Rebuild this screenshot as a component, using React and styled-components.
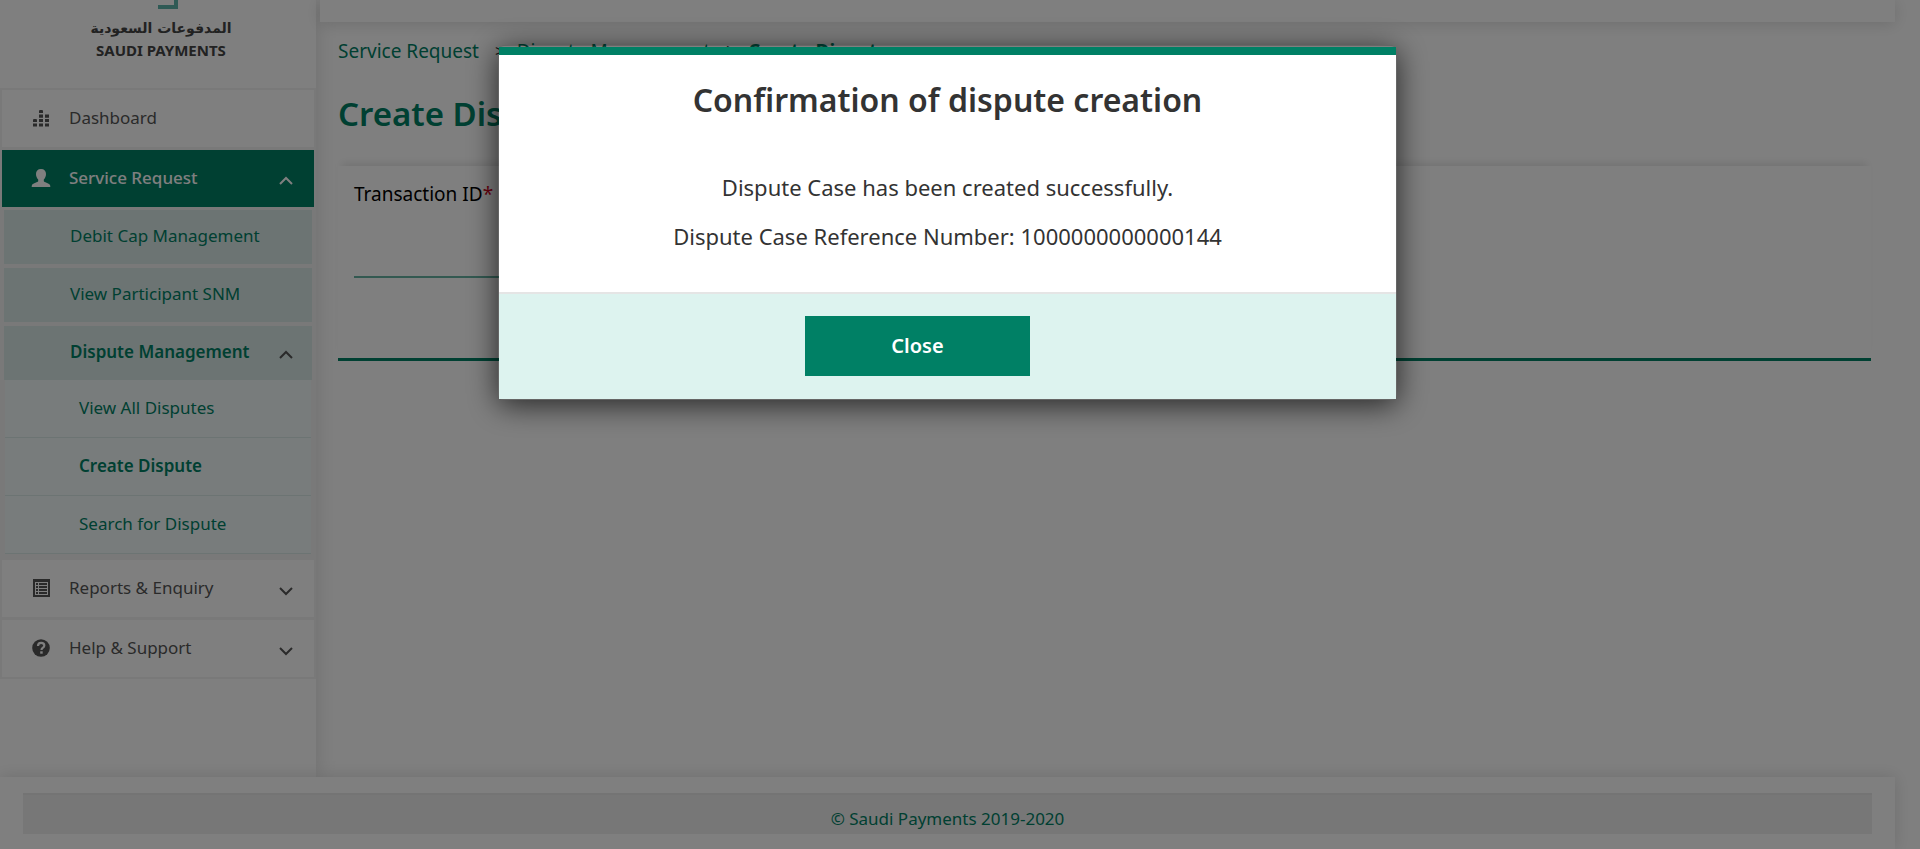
import React from "react";
import styled, { createGlobalStyle } from "styled-components";

const green = "#008065";
const line = "#f2f2f2";

const GlobalStyle = createGlobalStyle`
  * { box-sizing: border-box; }
  body { margin: 0; background: #fff; color: #333; font-family: "Noto Sans", "Open Sans", sans-serif; font-size: 17px; }
  h1, h2, p, ul, ol { margin: 0; padding: 0; }
  ul, ol { list-style: none; }
  a { color: inherit; text-decoration: none; }
`;

const Page = styled.div`
  display: flex;
  flex-direction: column;
  min-height: 100vh;
  padding-right: 25px;
  overflow: hidden;
`;

const Columns = styled.div`
  display: flex;
  flex: 1;
`;

const Sidebar = styled.aside`
  flex: 0 0 316px;
  background: #fff;
  box-shadow: 0 0 20px rgba(0, 0, 0, 0.14);
`;

const Logo = styled.div`
  display: flex;
  flex-direction: column;
  align-items: center;
  height: 88px;
  padding-left: 6px;
  color: #444;
  font-weight: 700;
`;

const LogoMark = styled.svg`
  display: block;
  width: 20px;
  height: 9px;
  margin: 0 0 8px 14px;
`;

const LogoArabic = styled.span`
  font-family: "DejaVu Sans", sans-serif;
  font-size: 14px;
  line-height: 22px;
`;

const LogoLatin = styled.span`
  font-size: 15px;
  line-height: 22px;
`;

const Menu = styled.ul`
  display: flex;
  flex-direction: column;
  gap: 3px;
  padding: 2px;
  background: ${line};
`;

const MenuLink = styled.a`
  display: flex;
  align-items: center;
  gap: 18px;
  height: 57px;
  padding: 0 21px 2px 29px;
  background: ${(p) => (p.$active ? green : "#fff")};
  color: ${(p) => (p.$active ? "#fff" : "#555")};
  font-weight: ${(p) => (p.$active ? 500 : 400)};
`;

const SubMenu = styled.ul`
  display: flex;
  flex-direction: column;
  gap: 4px;
  padding: 3px 2px;
`;

const SubLink = styled.a`
  display: flex;
  align-items: center;
  height: 54px;
  padding: 0 19px 3px 66px;
  background: #d8e8e6;
  color: ${green};
  font-weight: ${(p) => (p.$active ? 600 : 400)};
`;

const LeafMenu = styled.ul`
  padding: 0 1px;
`;

const LeafLink = styled(SubLink)`
  height: 58px;
  padding-left: 74px;
  background: #f1f9f9;
  border-bottom: 1px solid #d8e8e6;
`;

const ChevronIcon = styled.svg`
  width: 14px;
  height: 10px;
  margin: 6px 0 0 auto;
  color: ${(p) => (p.$light ? "#fff" : "#555")};
`;

const Main = styled.main`
  flex: 1;
  min-width: 0;
  padding-left: 4px;
`;

const Header = styled.header`
  height: 22px;
  background: #fff;
  box-shadow: 0 2px 16px rgba(0, 0, 0, 0.14);
`;

const Content = styled.div`
  padding: 15px 24px 0 18px;
`;

const Crumbs = styled.ol`
  display: flex;
  gap: 16px;
  color: ${green};
  font-size: 19px;
  line-height: 28px;

  li + li { display: flex; gap: 12px; }
  li + li::before { content: ">"; font-size: 17px; color: #333; }
  li:last-child { font-weight: 700; }
`;

const PageTitle = styled.h1`
  padding: 23px 0 26px;
  color: ${green};
  font-size: 33px;
  line-height: 52px;
  font-weight: 600;
`;

const Form = styled.form`
  padding: 12px 16px 80px;
  border-bottom: 3px solid ${green};
  box-shadow: 0 -7px 8px -4px rgba(0, 0, 0, 0.1);
`;

const Field = styled.label`
  display: block;
  width: 360px;
  color: #000;
  font-size: 19px;
  line-height: 32px;
`;

const Required = styled.span`
  color: #d0021b;
`;

const TextInput = styled.input`
  display: block;
  width: 100%;
  height: 68px;
  border: 0;
  border-bottom: 2px solid #66b3a3;
  background: transparent;
  font: inherit;
`;

const Footer = styled.footer`
  position: relative;
  padding: 16px 23px 15px;
  background: #fff;
  box-shadow: 0 0 16px rgba(0, 0, 0, 0.14);
`;

const Copyright = styled.p`
  height: 41px;
  padding-top: 12px;
  border-top: 2px solid #e8e8e8;
  background: #eee;
  color: ${green};
  line-height: 24px;
  text-align: center;
`;

const Backdrop = styled.div`
  position: fixed;
  inset: 0;
  display: flex;
  justify-content: center;
  align-items: flex-start;
  padding: 45px 25px 0 0;
  background: rgba(0, 0, 0, 0.5);
`;

const Dialog = styled.section`
  width: 899px;
  max-width: 100%;
  padding-top: 1px;
  border: 1px solid rgba(0, 0, 0, 0.2);
  border-radius: 6px;
  box-shadow: 0 5px 30px rgba(0, 0, 0, 0.7);
`;

const DialogHead = styled.header`
  border-top: 8px solid ${green};
  padding: 19px 20px 22px;
  background: #fff;
  text-align: center;
`;

const DialogTitle = styled.h2`
  font-size: 32px;
  line-height: 52px;
  font-weight: 600;
`;

const DialogBody = styled.div`
  padding: 15px 20px 31px;
  background: #fff;
  font-size: 22px;
  line-height: 49px;
  text-align: center;
`;

const DialogFoot = styled.footer`
  display: flex;
  justify-content: center;
  padding: 22px 60px 23px 0;
  border-top: 2px solid #e5e5e5;
  background: #ddf3ef;
`;

const CloseButton = styled.button`
  width: 225px;
  height: 60px;
  padding: 0 0 2px;
  border: 0;
  background: ${green};
  color: #fff;
  font: inherit;
  font-size: 20px;
  font-weight: 600;
`;

const Chevron = ({ up, light }) => (
  <ChevronIcon $light={light} viewBox="0 0 14 10" fill="none" stroke="currentColor" strokeWidth="2" aria-hidden="true">
    <path d={up ? "M1 8 7 2l6 6" : "M1 2l6 6 6-6"} />
  </ChevronIcon>
);

const DashboardIcon = () => (
  <svg width="20" height="20" viewBox="0 0 20 20" fill="currentColor" aria-hidden="true">
    <path d="M8 3.200Q8 2 9 2h2q1 0 1 1.200V5H8zM8 6.500h4v3.200H8zM14 6.500h4v3.200h-4zM2 12.200Q2 11 3 11h2q1 0 1 1.200V14H2zM8 11h4v3H8zM14 11h4v3h-4zM2 15.500h4v3H2zM8 15.500h4v3H8zM14 15.500h4v3h-4z" />
  </svg>
);

const UserIcon = () => (
  <svg width="20" height="20" viewBox="0 0 20 20" fill="currentColor" aria-hidden="true">
    <path d="M10 1c3.300 0 5 2 5 5 0 2.300-.9 4.200-2.200 5.500v1.800c0 .8 5.200 2 6.200 3.700.3.600.3 1.300.3 2H.7c0-.7 0-1.400.3-2 1-1.700 6.200-2.900 6.200-3.700v-1.800C5.900 10.200 5 8.300 5 6c0-3 1.700-5 5-5z" />
  </svg>
);

const ListIcon = () => (
  <svg width="20" height="20" viewBox="0 0 20 20" fill="none" stroke="currentColor" aria-hidden="true">
    <path d="M2 1h17v18H2zM4 4v13h13V4z" fill="currentColor" fillRule="evenodd" stroke="none" />
    <path d="M8 6h8M8 9h8M8 12h8M8 15h8M5 6h2M5 9h2M5 12h2M5 15h2" strokeWidth="1.800" />
  </svg>
);

const HelpIcon = () => (
  <svg width="20" height="20" viewBox="0 0 20 20" aria-hidden="true">
    <circle cx="10" cy="10" r="8.800" fill="currentColor" />
    <path d="M7 8c0-2 1.200-3.200 3.200-3.200 1.900 0 3.100 1 3.100 2.600 0 2.400-2.800 2-2.800 4.600" fill="none" stroke="#fff" strokeWidth="2.200" />
    <path d="M9.200 13.300h2.500v2.400H9.200z" fill="#fff" />
  </svg>
);

export default function App() {
  return (
    <>
      <GlobalStyle />
      <Page>
        <Columns>
          <Sidebar>
            <Logo>
              <LogoMark viewBox="0 0 20 9" aria-hidden="true">
                <path d="M16 0h4v9H0V5h16z" fill="#5fb5ab" />
              </LogoMark>
              <LogoArabic lang="ar" dir="rtl">المدفوعات السعودية</LogoArabic>
              <LogoLatin>SAUDI PAYMENTS</LogoLatin>
            </Logo>
            <nav aria-label="Main">
              <Menu>
                <li><MenuLink href="#dashboard"><DashboardIcon />Dashboard</MenuLink></li>
                <li>
                  <MenuLink href="#service" $active><UserIcon />Service Request<Chevron up light /></MenuLink>
                  <SubMenu>
                    <li><SubLink href="#debit-cap">Debit Cap Management</SubLink></li>
                    <li><SubLink href="#participant">View Participant SNM</SubLink></li>
                    <li>
                      <SubLink href="#disputes" $active>Dispute Management<Chevron up /></SubLink>
                      <LeafMenu>
                        <li><LeafLink href="#all">View All Disputes</LeafLink></li>
                        <li><LeafLink href="#create" $active>Create Dispute</LeafLink></li>
                        <li><LeafLink href="#search">Search for Dispute</LeafLink></li>
                      </LeafMenu>
                    </li>
                  </SubMenu>
                </li>
                <li><MenuLink href="#reports"><ListIcon />Reports &amp; Enquiry<Chevron /></MenuLink></li>
                <li><MenuLink href="#help"><HelpIcon />Help &amp; Support<Chevron /></MenuLink></li>
              </Menu>
            </nav>
          </Sidebar>
          <Main>
            <Header />
            <Content>
              <Crumbs>
                <li><a href="#service">Service Request</a></li>
                <li><a href="#disputes">Dispute Management</a></li>
                <li>Create Dispute</li>
              </Crumbs>
              <PageTitle>Create Dispute</PageTitle>
              <Form>
                <Field>
                  Transaction ID<Required>*</Required>
                  <TextInput type="text" name="transactionId" />
                </Field>
              </Form>
            </Content>
          </Main>
        </Columns>
        <Footer>
          <Copyright>© Saudi Payments 2019-2020</Copyright>
        </Footer>
      </Page>
      <Backdrop>
        <Dialog role="dialog" aria-modal="true" aria-labelledby="dialog-title">
          <DialogHead>
            <DialogTitle id="dialog-title">Confirmation of dispute creation</DialogTitle>
          </DialogHead>
          <DialogBody>
            <p>Dispute Case has been created successfully.</p>
            <p>Dispute Case Reference Number: 1000000000000144</p>
          </DialogBody>
          <DialogFoot>
            <CloseButton type="button">Close</CloseButton>
          </DialogFoot>
        </Dialog>
      </Backdrop>
    </>
  );
}
